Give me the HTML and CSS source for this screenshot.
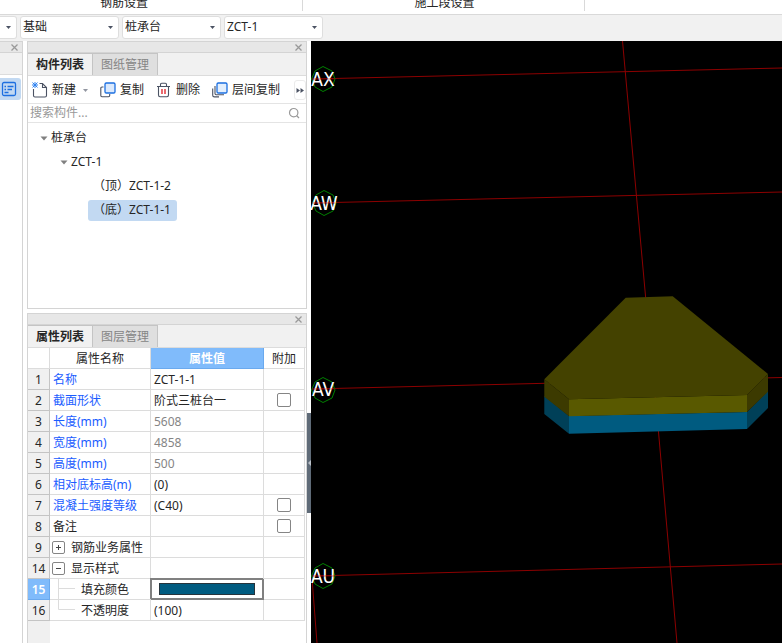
FILE: index.html
```html
<!DOCTYPE html>
<html lang="zh-CN">
<head>
<meta charset="utf-8">
<title>桩承台</title>
<link rel="stylesheet" href="styles.css">
</head>
<body>
<svg class="defs" width="0" height="0" aria-hidden="true">
  <symbol id="close" viewBox="0 0 7 7"><path d="M0.5 0.5L6.5 6.5M6.5 0.5L0.5 6.5" stroke="#999" stroke-width="1.3" fill="none"/></symbol>
  <symbol id="caret" viewBox="0 0 5 3"><path d="M0 0H5L2.5 3Z" fill="#4b5263"/></symbol>
  <symbol id="fold" viewBox="0 0 8 5"><path d="M0.5 0.5H7.5L4 4.5Z" fill="#808080"/></symbol>
</svg>
<header class="ribbon">
  <div class="group group-first">钢筋设置</div>
  <div class="group group-mid">施工段设置</div>
</header>
<nav class="filters">
  <label class="pick pick-cut"><select aria-label="楼层"><option></option></select><svg><use href="#caret"/></svg></label>
  <label class="pick"><select aria-label="分类"><option>基础</option></select><svg><use href="#caret"/></svg></label>
  <label class="pick"><select aria-label="类型"><option>桩承台</option></select><svg><use href="#caret"/></svg></label>
  <label class="pick"><select aria-label="构件"><option>ZCT-1</option></select><svg><use href="#caret"/></svg></label>
</nav>
<main class="work">
  <aside class="dock">
    <div class="titlebar"><button class="close" aria-label="关闭"><svg><use href="#close"/></svg></button></div>
    <div class="strip"></div>
    <button class="dock-btn" aria-label="列表"><svg width="16" height="16" viewBox="0 0 16 16" fill="none" stroke="#1c6fe0" stroke-width="1.3"><rect x="1.5" y="1.5" width="13" height="13" rx="1.5"/><path d="M3.5 5.5H5M6.5 5.5H12.5M3.5 8.5H5M6.5 8.5H11M3.5 11.5H7.5"/></svg></button>
  </aside>
  <div class="panels">
    <section class="panel panel-parts">
      <div class="titlebar"><button class="close" aria-label="关闭"><svg><use href="#close"/></svg></button></div>
      <div class="tabs"><button class="tab active">构件列表</button><button class="tab">图纸管理</button></div>
      <div class="toolbar">
        <button class="tool"><svg width="16" height="16" viewBox="0 0 16 16"><path d="M1.5 7V13.5Q1.5 15 3 15H13Q14.5 15 14.5 13.5V5.5L10.5 1.5H7.5M10.5 1.5V5.5H14.5" fill="none" stroke="#4b5263" stroke-width="1.1"/><path d="M0.5 0.5L5.5 5.5M5.5 0.5L0.5 5.5M3 0V6M0 3H6" stroke="#2f82f0"/></svg>新建<svg class="more"><use href="#caret"/></svg></button>
        <button class="tool"><svg width="16" height="16" viewBox="0 0 16 16" fill="none"><path d="M3.5 5H2Q0.8 5 0.8 6.2V13.5Q0.8 14.7 2 14.7H8.5Q9.7 14.7 9.7 13.5V12" stroke="#4b5263" stroke-width="1.1"/><rect x="5" y="1" width="10" height="10" rx="1.3" fill="#dbe9fc" stroke="#1c6fe0" stroke-width="1.3"/></svg>复制</button>
        <button class="tool"><svg width="16" height="16" viewBox="0 0 16 16" fill="none" stroke="#4b5263" stroke-width="1.1"><path d="M1 4.5H14M4.5 4V2.5Q4.5 1.3 5.7 1.3H9.3Q10.5 1.3 10.5 2.5V4M2.5 4.5V13Q2.5 14.7 4 14.7H11Q12.5 14.7 12.5 13V4.5"/><path d="M6 7V12M9 7V12" stroke="#e11b22" stroke-width="1.3"/></svg>删除</button>
        <button class="tool"><svg width="16" height="16" viewBox="0 0 16 16" fill="none"><path d="M3 4V11.5Q3 12.7 4.2 12.7H12M0.7 6.5V13.2Q0.7 14.9 2.4 14.9H7" stroke="#4b5263" stroke-width="1.1"/><rect x="5" y="1" width="10" height="10" rx="1.3" fill="#e3effd" stroke="#1c6fe0" stroke-width="1.3"/></svg>层间复制</button>
        <button class="overflow" aria-label="更多"><svg width="8" height="5" viewBox="0 0 8 5" fill="#4b5263"><path d="M0.5 0V5L4 2.5ZM4.5 0V5L8 2.5Z"/></svg></button>
      </div>
      <label class="search"><input type="text" placeholder="搜索构件..."><svg width="12" height="12" viewBox="0 0 12 12" fill="none" stroke="#999" stroke-width="1.2"><circle cx="5.7" cy="5.7" r="4.2"/><path d="M8.5 8.5L11 11"/></svg></label>
      <ul class="tree">
        <li class="level-1"><svg><use href="#fold"/></svg>桩承台</li>
        <li class="level-2"><svg><use href="#fold"/></svg>ZCT-1</li>
        <li class="level-3"><span>（顶）ZCT-1-2</span></li>
        <li class="level-3"><span class="picked">（底）ZCT-1-1</span></li>
      </ul>
    </section>
    <section class="panel panel-props">
      <div class="titlebar"><button class="close" aria-label="关闭"><svg><use href="#close"/></svg></button></div>
      <div class="tabs"><button class="tab active">属性列表</button><button class="tab">图层管理</button></div>
      <div class="sheet">
      <table>
        <colgroup><col class="c-no"><col class="c-name"><col class="c-value"><col class="c-extra"></colgroup>
        <thead><tr><td></td><th>属性名称</th><th class="on">属性值</th><th>附加</th></tr></thead>
        <tbody>
        <tr><th>1</th><td class="key">名称</td><td>ZCT-1-1</td><td></td></tr>
        <tr><th>2</th><td class="key">截面形状</td><td>阶式三桩台一</td><td class="tick"><input type="checkbox" aria-label="截面形状"></td></tr>
        <tr><th>3</th><td class="key">长度(mm)</td><td class="dim">5608</td><td></td></tr>
        <tr><th>4</th><td class="key">宽度(mm)</td><td class="dim">4858</td><td></td></tr>
        <tr><th>5</th><td class="key">高度(mm)</td><td class="dim">500</td><td></td></tr>
        <tr><th>6</th><td class="key">相对底标高(m)</td><td>(0)</td><td></td></tr>
        <tr><th>7</th><td class="key">混凝土强度等级</td><td>(C40)</td><td class="tick"><input type="checkbox" aria-label="混凝土强度等级"></td></tr>
        <tr><th>8</th><td>备注</td><td></td><td class="tick"><input type="checkbox" aria-label="备注"></td></tr>
        <tr><th>9</th><td class="nest"><div class="branch"><button class="expand" aria-label="展开"><svg width="7" height="7" viewBox="0 0 7 7"><path d="M1 3.5H6M3.5 1V6" stroke="#444"/></svg></button><span>钢筋业务属性</span></div></td><td></td><td></td></tr>
        <tr><th>14</th><td class="nest"><div class="branch"><button class="expand" aria-label="收起"><svg width="7" height="7" viewBox="0 0 7 7"><path d="M1 3.5H6" stroke="#444"/></svg></button><span>显示样式</span></div></td><td></td><td></td></tr>
        <tr><th class="on">15</th><td class="nest"><div class="branch"><svg class="guide" viewBox="0 0 28 20"><path d="M5.5 0V20M5.5 9.5H22"/></svg><span>填充颜色</span></div></td><td class="editing"><button class="swatch" aria-label="填充颜色"></button></td><td></td></tr>
        <tr><th>16</th><td class="nest"><div class="branch"><svg class="guide" viewBox="0 0 28 20"><path d="M5.5 0V9.5H22"/></svg><span>不透明度</span></div></td><td>(100)</td><td></td></tr>
        </tbody>
      </table>
      </div>
    </section>
  </div>
  <div class="splitter"><button aria-label="折叠"><svg width="3" height="6" viewBox="0 0 3 6"><path d="M3 0V6L0 3Z" fill="#b9c0c8"/></svg></button></div>
  <div class="view">
    <svg viewBox="0 0 471 602" preserveAspectRatio="xMinYMin slice">
      <g class="grid-lines">
        <path d="M1 38L471 27M1 162L471 151M1 348L471 336.5M1 535L471 523M311.5 0L334.5 255L347.5 391L366 602M1 537L6 602"/>
      </g>
      <g>
        <path fill="#004058" d="M233.3 355L258 375V392.7L233.3 373ZM436 371L457 350V367L436 388Z"/>
        <path fill="#005b80" d="M258 375L436 371V388L258 392.7Z"/>
        <path fill="#3c3a00" d="M233.3 338.3L258 358.3V375.3L233.3 355.7ZM436 354L457 333V350.7L436 371Z"/>
        <path fill="#595900" d="M258 358.3L436 354V371L258 375.3Z"/>
        <path fill="#444200" d="M314.7 256.7L361.7 255.3L457 333L436 354L258 358.3L233.3 338.3Z"/>
      </g>
      <g class="marks">
        <path id="ring" d="M12 25.5L21 30L24 38L21 46L12 50.5L4 46L0.5 38L4 30Z"/>
        <use href="#ring" x="1" y="124"/>
        <use href="#ring" y="311"/>
        <use href="#ring" y="497"/>
      </g>
      <g class="names">
        <text x="12" y="45">AX</text>
        <text x="13" y="169">AW</text>
        <text x="12" y="355">AV</text>
        <text x="12" y="542">AU</text>
      </g>
      <path class="overlay" d="M1 38H24M1 162H24M1 348H24M1 535H24"/>
    </svg>
  </div>
</main>
</body>
</html>
```
FILE: styles.css
```css
* { box-sizing: border-box; }

body {
  margin: 0;
  height: 100vh;
  display: flex;
  flex-direction: column;
  overflow: hidden;
  background: #fff;
  color: #262626;
  font: 12px/16px "Noto Sans", "Noto Sans CJK SC", sans-serif;
}

button, input, select {
  font: inherit;
  color: inherit;
  margin: 0;
  padding: 0;
  border: 0;
  background: none;
}

svg { display: block; flex: none; }
.defs { position: absolute; }

.ribbon {
  display: flex;
  flex: none;
  height: 15px;
  border-bottom: 1px solid #d9d9d9;
}
.group {
  display: flex;
  align-items: flex-end;
  justify-content: center;
  height: 11px;
  border-right: 1px solid #d9d9d9;
}
.group-first { width: 303px; padding-right: 54px; }
.group-mid { width: 282px; padding-left: 2px; }

.filters {
  display: flex;
  flex: none;
  align-items: center;
  gap: 3px;
  height: 26px;
  padding-bottom: 2px;
  background: #f1f1f1;
}
.pick { position: relative; width: 99px; height: 23px; }
.pick select {
  appearance: none;
  display: block;
  width: 100%;
  height: 100%;
  padding: 0 4px 0 2px;
  background: #fff;
  border: 1px solid #dedede;
  border-radius: 3px;
}
.pick svg {
  position: absolute;
  right: 6px;
  top: 10px;
  width: 5px;
  height: 3px;
  pointer-events: none;
}
.pick-cut { width: 17px; }
.pick-cut select { border-left: 0; border-radius: 0 3px 3px 0; }

.work { display: flex; flex: 1; min-height: 0; }

.titlebar {
  display: flex;
  flex: none;
  align-items: center;
  justify-content: flex-end;
  height: 12px;
  padding-right: 4px;
  background: #e7e7e7;
  border-top: 1px solid #d4d4d4;
  border-bottom: 1px solid #d4d4d4;
}
.close svg { width: 7px; height: 7px; }

.dock { width: 23px; border-right: 1px solid #d4d4d4; }
.strip { height: 22px; background: #f1f1f1; border-bottom: 1px solid #dcdcdc; }
.dock-btn {
  display: flex;
  align-items: center;
  justify-content: center;
  width: 21px;
  height: 22px;
  margin-top: 3px;
  padding-right: 4px;
  background: #c2d9f2;
  border-radius: 0 3px 3px 0;
}

.panels {
  display: flex;
  flex-direction: column;
  gap: 4px;
  width: 280px;
  margin-left: 4px;
}
.panel {
  display: flex;
  flex-direction: column;
  border: 1px solid #d4d4d4;
  border-top: 0;
}
.panel-parts { height: 268px; flex: none; }
.panel-props { flex: 1; min-height: 0; border-bottom: 0; }

.tabs {
  display: flex;
  flex: none;
  height: 23px;
  background: #f1f1f1;
  border-bottom: 1px solid #dcdcdc;
}
.tab {
  width: 65px;
  color: #858585;
  background: #dfdfdf;
  border-right: 1px solid #c4c4c4;
  border-top: 1px solid #c4c4c4;
}
.tab.active { color: #262626; background: #f1f1f1; font-weight: 600; }

.toolbar {
  display: flex;
  flex: none;
  align-items: center;
  gap: 12px;
  height: 28px;
  padding: 1px 0 0 4px;
  border-bottom: 1px solid #e4e4e4;
}
.tool { display: flex; align-items: center; gap: 4px; white-space: nowrap; }
.tool .more { width: 5px; height: 3px; margin-left: 3px; opacity: 0.6; }
.overflow {
  display: flex;
  align-items: center;
  justify-content: center;
  width: 12px;
  height: 20px;
  margin-left: auto;
  border: 1px solid #ebebeb;
  border-radius: 3px;
}

.search {
  display: flex;
  flex: none;
  align-items: center;
  height: 19px;
  padding: 0 6px 0 2px;
  border-bottom: 1px solid #e4e4e4;
}
.search input { flex: 1; min-width: 0; outline: 0; }
.search input::placeholder { color: #999; }

.tree { margin: 0; padding: 3px 0 0; list-style: none; }
.tree li { display: flex; align-items: center; gap: 3px; height: 24px; }
.tree svg { width: 8px; height: 5px; }
.level-1 { padding-left: 12px; }
.level-2 { padding-left: 32px; }
.level-3 { padding-left: 60px; }
.tree span { padding: 2px 6px 3px 5px; border-radius: 3px; }
.tree .picked { background: #c2d9f2; }

.sheet {
  flex: 1;
  min-height: 0;
  background: linear-gradient(90deg, #f0f0f0 22px, #fff 22px);
}
table {
  width: 277px;
  table-layout: fixed;
  border-collapse: separate;
  border-spacing: 0;
}
.c-no { width: 22px; }
.c-name { width: 101px; }
.c-value { width: 113px; }
.c-extra { width: 41px; }
tr { height: 21px; }
td, th {
  height: 21px;
  padding: 2px 3px 0;
  border-right: 1px solid #dcdcdc;
  border-bottom: 1px solid #dcdcdc;
  font-weight: 400;
  line-height: 16px;
  white-space: nowrap;
}
thead td { background: #fff; }
thead th { padding: 1px 0 0; }
tbody th { padding: 2px 0 0; background: #f0f0f0; border-color: #c4c4c4; }
thead .on, tbody .on {
  color: #fff;
  font-weight: 600;
  background: #80bbfb;
  border-color: #6aa9ee;
}
.key { color: #1a5cff; }
.dim { color: #858585; }
.tick { padding: 0; }
.tick input {
  appearance: none;
  display: block;
  width: 14px;
  height: 14px;
  margin: 0 auto;
  background: #fff;
  border: 1px solid #858585;
  border-radius: 2px;
}
.nest { padding: 0 3px; }
.branch { display: flex; align-items: center; height: 20px; }
.branch span { padding-top: 2px; }
.expand {
  display: flex;
  align-items: center;
  justify-content: center;
  width: 13px;
  height: 13px;
  margin: 0 6px 0 -1px;
  border: 1px solid #858585;
  border-radius: 2px;
}
.guide { width: 28px; height: 20px; fill: none; stroke: #dcdcdc; }
.editing {
  padding: 0;
  border-color: #808080;
  box-shadow: -1px -1px 0 #808080, inset 0 0 0 1px #808080;
}
.swatch {
  display: block;
  width: 96px;
  height: 12px;
  margin: 0 auto;
  background: #005b80;
  border: 1px solid #26343c;
}

.splitter { display: flex; align-items: center; width: 4px; margin-top: 242px; }
.splitter button {
  display: flex;
  align-items: center;
  justify-content: flex-end;
  width: 4px;
  height: 100px;
  background: #5f6b78;
}

.view { flex: 1; min-width: 0; background: #000; }
.view svg { width: 100%; height: 100%; }
.grid-lines, .overlay { fill: none; stroke: #8c0000; }
.overlay { opacity: 0.5; }
.marks { fill: none; stroke: #008000; }
.names {
  fill: #fff;
  font: 19px "Liberation Sans Narrow", "DejaVu Sans Condensed", sans-serif;
  text-anchor: middle;
}
```
